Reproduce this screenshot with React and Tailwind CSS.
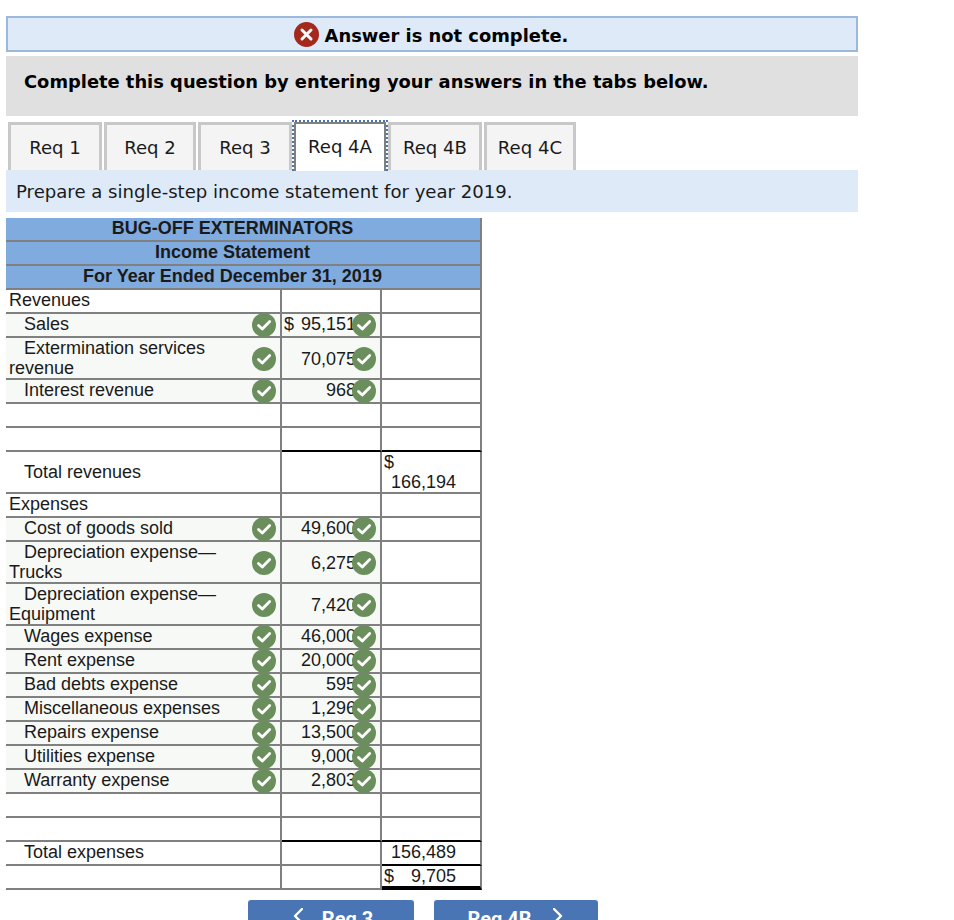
const Check = ({ className }) => (
  <svg viewBox="0 0 24 24" className={`absolute w-6 h-6 ${className}`}>
    <circle cx="12" cy="12" r="12" fill="#6a8f5c" />
    <path d="M6.5 12.5l3.8 3.6 7.4-7.6" fill="none" stroke="#fff" strokeWidth="2.8" strokeLinecap="round" strokeLinejoin="round" />
  </svg>
);

const rows = [
  { label: "Revenues", top: true },
  { label: "Sales", v: "95,151", dollar: true, ok: true },
  { label: "Extermination services revenue", v: "70,075", ok: true, tall: true },
  { label: "Interest revenue", v: "968", ok: true },
  {},
  { blackB: true },
  { label: "Total revenues", tall: true, total: "166,194", dollarAbove: true },
  { label: "Expenses", top: true },
  { label: "Cost of goods sold", v: "49,600", ok: true },
  { label: "Depreciation expense—Trucks", v: "6,275", ok: true, tall: true },
  { label: "Depreciation expense—Equipment", v: "7,420", ok: true, tall: true },
  { label: "Wages expense", v: "46,000", ok: true },
  { label: "Rent expense", v: "20,000", ok: true },
  { label: "Bad debts expense", v: "595", ok: true },
  { label: "Miscellaneous expenses", v: "1,296", ok: true },
  { label: "Repairs expense", v: "13,500", ok: true },
  { label: "Utilities expense", v: "9,000", ok: true },
  { label: "Warranty expense", v: "2,803", ok: true },
  {},
  { blackB: true },
  { label: "Total expenses", total: "156,489", black3: true },
  { net: true },
];

function Row({ r }) {
  const fill = r.ok ? "bg-[#f7f9f6]" : "";
  const h = r.tall ? "h-[42px]" : "h-6";
  const iconY = r.tall ? "top-[calc(50%+1px)] -translate-y-1/2" : "top-1/2 -translate-y-1/2";
  const align = r.tall ? "items-center" : "items-start";
  return (
    <div className={`grid grid-cols-[276px_100px_100px] leading-5 ${h}`}>
      <div className={`relative flex ${align} border-r-2 border-b-2 border-[#808080] pl-[3px] pr-[44px] ${fill}`}>
        <div className={r.top ? "" : "indent-[15px]"}>{r.label}</div>
        {r.ok && <Check className={`right-[4px] ${iconY}`} />}
      </div>
      <div className={`relative flex ${align} justify-end border-r-2 border-b-2 pr-6 ${r.tall ? "pt-[2px]" : ""} ${fill} ${r.blackB ? "border-b-black" : "border-b-[#808080]"} border-r-[#808080]`}>
        {r.dollar && <span className="mr-auto pl-[2px]">$</span>}
        <span>{r.v}</span>
        {r.ok && <Check className={`right-[4px] ${iconY}`} />}
      </div>
      <div className={`flex border-r-2 border-r-[#808080] ${r.net ? "border-b-4 border-b-black" : r.blackB || r.black3 ? "border-b-2 border-b-black" : "border-b-2 border-b-[#808080]"} pr-6`}>
        {r.dollarAbove && (
          <div className="w-full pl-[2px]">
            <div>$</div>
            <div className="text-right">{r.total}</div>
          </div>
        )}
        {r.black3 && <div className="w-full text-right">{r.total}</div>}
        {r.net && (
          <div className="w-full flex justify-between pl-[2px]">
            <span>$</span>
            <span>9,705</span>
          </div>
        )}
      </div>
    </div>
  );
}

const tabs = [
  ["Req 1", "w-[94px] ml-[2px]"],
  ["Req 2", "w-[92px] ml-[2px]"],
  ["Req 3", "w-[94px] ml-[2px]"],
  ["Req 4A", "w-[96px]", true],
  ["Req 4B", "w-[94px]"],
  ["Req 4C", "w-[92px] ml-[2px]"],
];

export default function App() {
  return (
    <div className="h-[920px] w-[954px] overflow-hidden bg-white pt-4 pl-[6px] text-[#1a1a1a] font-['Liberation_Sans',sans-serif]">
      <div className="w-[852px] font-['DejaVu_Sans',sans-serif]">
        <div className="flex h-9 items-center justify-center gap-[6px] border-2 border-[#9ab9dc] bg-[#deeaf8] pr-[2px] text-[17.9px] font-bold text-black">
          <svg viewBox="0 0 25 25" className="h-[25px] w-[25px]">
            <circle cx="12.5" cy="12.5" r="12.5" fill="#a5281d" />
            <path d="M8 8l9 9M17 8l-9 9" stroke="#fff" strokeWidth="3" strokeLinecap="round" />
          </svg>
          <span className="mt-[4px]">Answer is not complete.</span>
        </div>
        <div className="mt-1 flex h-[60px] items-center bg-[#e0e0e0] pl-[18px] pb-2 text-[17.87px] font-bold text-black">
          Complete this question by entering your answers in the tabs below.
        </div>
        <div className="mt-[6px] flex h-12 items-end text-[18.1px]">
          {tabs.map(([t, cls, active]) =>
            active ? (
              <div key={t} className={`${cls} relative z-10 -mb-px h-[51px] border-x-2 border-t-2 border-dotted border-[#4a75b4]`}>
                <div className="flex h-full items-center justify-center border-x-2 border-t-2 border-[#808080] bg-white pb-[2px]">{t}</div>
              </div>
            ) : (
              <div key={t} className={`flex h-12 items-center justify-center border-x-[3px] border-t-[3px] border-[#c8c8c8] bg-[#f4f4f4] ${cls}`}>
                {t}
              </div>
            )
          )}
        </div>
        <div className="flex h-[42px] items-center bg-[#deeaf8] pl-[10px] pt-[2px] text-[18.1px]">
          Prepare a single-step income statement for year 2019.
        </div>
      </div>

      <div className="mt-[6px] w-[476px] text-[18px]">
        <div className="border-r-2 border-[#808080] bg-[#7fabdf] font-bold leading-5">
          {["BUG-OFF EXTERMINATORS", "Income Statement", "For Year Ended December 31, 2019"].map((t) => (
            <div key={t} className="flex h-6 items-start justify-center border-b-2 border-[#808080] pr-[21px]">
              {t}
            </div>
          ))}
        </div>
        {rows.map((r, i) => (
          <Row key={i} r={r} />
        ))}
      </div>

      <div className="mt-[10px] flex gap-5 pl-[242px] font-['Roboto',sans-serif] text-[20px] leading-6 font-bold text-white">
        <div className="flex h-10 w-[166px] items-start justify-center gap-[19px] rounded-[3px] bg-[#4a75b4] pl-1 pt-[7px]">
          <svg viewBox="0 0 10 16" className="mt-[1px] h-4 w-[10px]" fill="none" stroke="#fff" strokeWidth="2.4" strokeLinecap="round" strokeLinejoin="round">
            <path d="M9 1L2 8l7 7" />
          </svg>
          <span>Req 3</span>
        </div>
        <div className="flex h-10 w-[164px] items-start justify-center gap-[21px] rounded-[3px] bg-[#4a75b4] pr-[2px] pt-[7px]">
          <span>Req 4B</span>
          <svg viewBox="0 0 10 16" className="mt-[1px] h-4 w-[10px]" fill="none" stroke="#fff" strokeWidth="2.4" strokeLinecap="round" strokeLinejoin="round">
            <path d="M1 1l7 7-7 7" />
          </svg>
        </div>
      </div>
    </div>
  );
}
